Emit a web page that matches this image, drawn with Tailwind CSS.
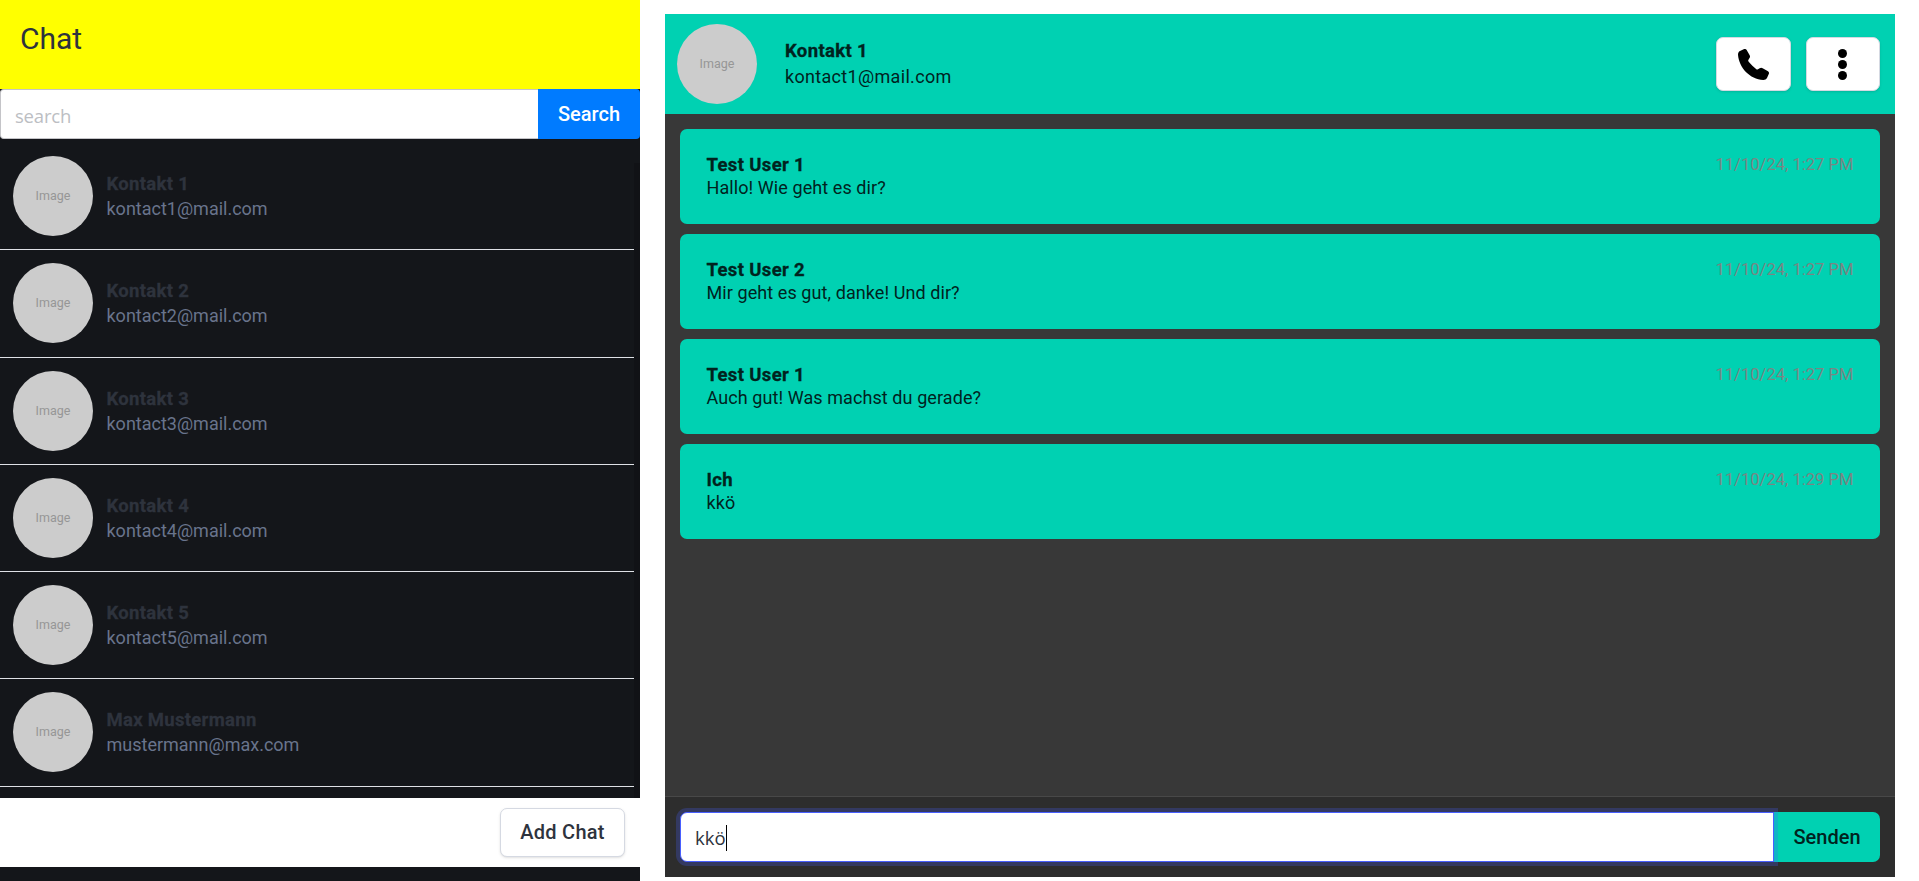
<!DOCTYPE html>
<html lang="de">
<head>
<meta charset="utf-8">
<title>Chat</title>
<script src="https://cdn.jsdelivr.net/npm/@tailwindcss/browser@4"></script>
</head>
<body class="h-[881px] overflow-hidden bg-white font-['Roboto',sans-serif] text-[18px]">
<div class="flex h-[881px]">
  <aside class="flex w-[640px] flex-col bg-[#14161a]">
    <header class="h-[89px] bg-[#ffff00] px-5 pt-[18px]"><h1 class="text-[30px] leading-[42px] text-[#2e333d]">Chat</h1></header>
    <form class="flex h-[50px]">
      <div class="flex flex-1 items-center rounded-l border border-r-0 border-[#c4c4c8] bg-white pl-[14px] pt-[3px] font-['Open_Sans',sans-serif] text-[18.5px] tracking-[-0.2px] text-[#bcbec3]">search</div>
      <button type="button" class="h-[50px] w-[102px] rounded-r bg-[#007bff] text-[20px] font-medium text-white">Search</button>
    </form>
    <div class="flex h-[659px]">
      <ul id="contacts" class="flex-1 overflow-hidden pt-[4px]"></ul>
      <div class="mt-6 w-[6px] bg-[#111216]"></div>
    </div>
    <div class="flex h-[69px] items-start justify-end bg-white pt-[10px] pr-[15px]">
      <button type="button" class="h-[49px] w-[125px] rounded-[7px] border border-[#d5d9e2] bg-white pb-[2px] text-[20px] font-medium tracking-[0.25px] text-[#2e333d] shadow-sm">Add Chat</button>
    </div>
  </aside>
  <main class="mt-[14px] ml-[25px] flex h-[863px] w-[1230px] flex-col bg-[#383838]">
    <header class="flex h-[100px] items-center bg-[#00d1b2] pl-3 pr-[15px]">
      <div class="flex size-20 items-center justify-center rounded-full bg-[#ccc] text-[12.5px] text-[#969696]">Image</div>
      <div class="ml-7 flex-1 leading-[26px] text-[#00231e]">
        <div class="text-[18.5px] font-bold tracking-[0.35px] [-webkit-text-stroke:0.3px]">Kontakt 1</div>
        <div class="tracking-[0.32px]">kontact1@mail.com</div>
      </div>
      <button type="button" aria-label="Anrufen" class="mr-[15px] flex h-[54px] w-[75px] items-center justify-center rounded-[7px] border border-[#d5d9e2] bg-white shadow-sm">
        <svg class="size-[31px]" viewBox="0 0 93 93"><path d="M0 17C0 12 2 8 6 6L17 1C21-1 24 0 26 3L35 19C37 23 36 25 34 28L31 33C30 35 31 36 32 38C39 46 47 54 55 61C57 62 58 62 60 61L65 58C68 56 71 56 74 58L90 67C93 69 94 72 92 76L87 87C85 91 81 93 76 93C35 90 3 56 0 17Z"/></svg>
      </button>
      <button type="button" aria-label="Mehr" class="flex h-[54px] w-[74px] items-center justify-center rounded-[7px] border border-[#d5d9e2] bg-white pr-[1px] shadow-sm">
        <svg class="h-[31px] w-[9px]" viewBox="0 0 9 31"><circle cx="4.500" cy="4.500" r="4.500"/><circle cx="4.500" cy="15.500" r="4.500"/><circle cx="4.500" cy="26.500" r="4.500"/></svg>
      </button>
    </header>
    <section id="messages" class="flex flex-1 flex-col gap-[10px] p-[15px]"></section>
    <footer class="flex h-[81px] border-t border-[#484848] bg-[#2d2d2d] px-[15px] pt-[15px]">
      <div class="relative flex h-[50px] w-[1094px] items-center rounded-l-[7px] border border-[#485fff] bg-white pl-[14px] pt-[2px] font-['Open_Sans',sans-serif] text-[18.5px] text-[#2e333d] ring-4 ring-[#485fff]/25">kkö<span class="h-[26px] w-px bg-black"></span></div>
      <button type="button" class="h-[50px] flex-1 rounded-r-[7px] bg-[#00d1b2] text-[20px] font-medium text-[#00231e]">Senden</button>
    </footer>
  </main>
</div>
<script>
const contacts=[["Kontakt 1","kontact1@mail.com"],["Kontakt 2","kontact2@mail.com"],["Kontakt 3","kontact3@mail.com"],["Kontakt 4","kontact4@mail.com"],["Kontakt 5","kontact5@mail.com"],["Max Mustermann","mustermann@max.com"]];
document.getElementById("contacts").innerHTML=contacts.map(([n,e])=>`<li class="flex h-[107px] items-start border-b border-[#dfe1e6] pl-[13px] pt-[13px] nth-[2]:h-[108px] nth-[6]:h-[108px]">
<div class="flex size-20 items-center justify-center rounded-full bg-[#ccc] pt-[1px] text-[12.5px] text-[#969696]">Image</div>
<div class="ml-[13.500px] mt-[15px] leading-[25px]"><div class="h-[25px] pt-px text-[18.5px] font-bold tracking-[0.3px] text-[#2e333d] [-webkit-text-stroke:0.3px]">${n}</div><div class="text-[#69748c]">${e}</div></div></li>`).join("");
const messages=[["Test User 1","Hallo! Wie geht es dir?","11/10/24, 1:27 PM"],["Test User 2","Mir geht es gut, danke! Und dir?","11/10/24, 1:27 PM"],["Test User 1","Auch gut! Was machst du gerade?","11/10/24, 1:27 PM"],["Ich","kkö","11/10/24, 1:29 PM"]];
document.getElementById("messages").innerHTML=messages.map(([n,t,d])=>`<article class="flex h-[95px] justify-between rounded-[7px] bg-[#00d1b2] px-[26.500px] pt-[24px] leading-[23px] text-[#00231e]">
<div><div class="h-[23px] pt-px text-[18.5px] font-bold tracking-[0.35px] [-webkit-text-stroke:0.3px]">${n}</div><div class="tracking-[0.08px]">${t}</div></div><time class="text-[16.6px] text-[#7a8583]">${d}</time></article>`).join("");
</script>
</body>
</html>
